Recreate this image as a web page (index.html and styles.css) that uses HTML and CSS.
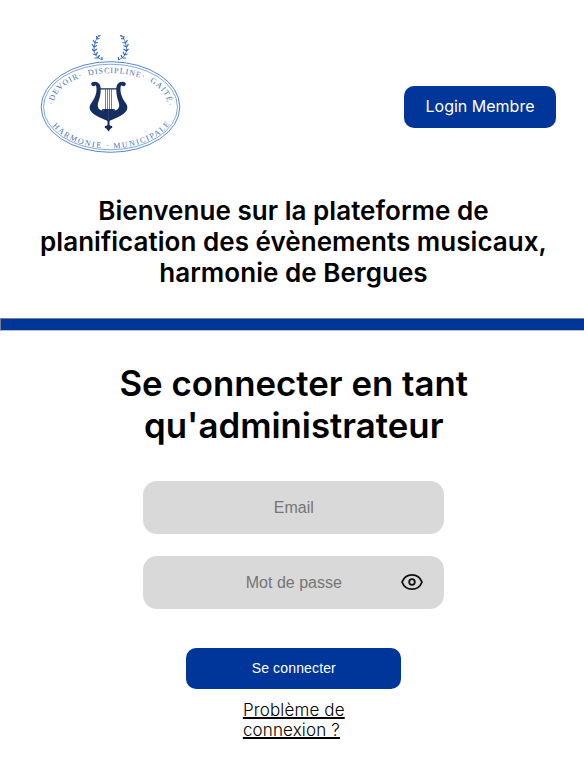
FILE: index.html
```html
<!DOCTYPE html>
<html lang="fr">
<head>
<meta charset="utf-8">
<title>Harmonie de Bergues</title>
<link rel="stylesheet" href="styles.css">
</head>
<body>
<header class="header">
  <svg class="logo" viewBox="30 25 160 135" role="img" aria-label="Harmonie municipale">
    <defs>
      <path id="arc-top" d="M53.500 105A57 32 0 0 1 167.500 105V112"/>
      <path id="arc-bottom" d="M52.500 126A65 41 0 0 0 170.500 123"/>
      <g id="branch">
        <path d="M102 60Q93 56 94 47Q95 40 99 35" fill="none" stroke="#3f74c4" stroke-width=".9"/>
        <path d="M98.500 36.500l2-1M97 39l-.5-3M97 39l2.500-.5M95 43l-2-3M95 43l3-.5M94 47l-2-3M94 47l3-1.500M94 51l-2-2M94 51l3-2M96 55l-3-1M96 55l1.500-3M98 58l-3.500 0M98 58l1.500-3M102 60l0-3" fill="none" stroke="#2f68bd" stroke-width="1.200"/>
      </g>
      <path id="lyre-half" d="M108.700 122C106 119.500 101 118.500 96 115.500C90 112 88 108 91 103.500C94 99.500 97 94 96.500 88C96.300 86.500 96 85.500 95.300 85.300C94.500 87 91 86.400 91.100 83.800C91.400 81.500 95.500 81 97.700 82.500C100.200 83.900 100.800 86.500 100.700 90C100.600 97 98.700 100 97.900 104C97.300 107.500 99 109.500 101.500 110.300C103 110.800 104 110.800 104 110.500H102.300V109H108.700Z"/>
    </defs>
    <use href="#branch"/>
    <use href="#branch" transform="translate(220.500 0) scale(-1 1)"/>
    <g fill="none" stroke="#4b82cd">
      <ellipse cx="110.500" cy="107" rx="69.300" ry="45.300" stroke-width=".95"/>
      <ellipse cx="110.500" cy="107" rx="67" ry="42.800" stroke-width=".7"/>
    </g>
    <g class="motto">
      <text><textPath href="#arc-top" textLength="143">·DEVOIR·&#160; DISCIPLINE·&#160; GAITÉ·</textPath></text>
      <text><textPath href="#arc-bottom" textLength="130">HARMONIE · MUNICIPALE</textPath></text>
    </g>
    <g fill="#152e61">
      <use href="#lyre-half"/>
      <use href="#lyre-half" transform="translate(217 0) scale(-1 1)"/>
      <path d="M99 88.300h19v1.200H99zM107.500 121h2v4h-2zM108.500 123.500l3.200 3.800-3.200 4.200-3.200-4.200z"/>
      <circle cx="105.900" cy="127" r="1.200"/><circle cx="111.100" cy="127" r="1.200"/>
    </g>
    <path d="M105.500 89v20M107.500 89v20M109.500 89v20M111.500 89v20" stroke="#4b5d86" stroke-width=".8"/>
  </svg>
  <a class="login">Login Membre</a>
</header>
<h2 class="welcome">Bienvenue sur la plateforme de<br>planification des évènements musicaux,<br>harmonie de Bergues</h2>
<hr class="divider">
<main class="main">
  <h1 class="title">Se connecter en tant<br>qu'administrateur</h1>
  <form class="form">
    <input class="field" type="email" placeholder="Email">
    <div class="password">
      <input class="field" type="password" placeholder="Mot de passe">
      <svg class="eye" viewBox="0 0 24 24" fill="none" stroke="#111" stroke-width="1.800" stroke-linejoin="round"><path d="M2 12C3.500 8 7 4.800 12 4.800S20.500 8 22 12C20.500 16 17 19.200 12 19.200S3.500 16 2 12Z"/><circle cx="12" cy="12" r="2.800"/></svg>
    </div>
    <button class="submit" type="button">Se connecter</button>
  </form>
  <a class="help">Problème de<br>connexion ?</a>
</main>
</body>
</html>
```
FILE: styles.css
```css
* { box-sizing: border-box; }
body {
  margin: 0;
  background: #fff;
  color: #000;
  font-family: Inter, "Liberation Sans", sans-serif;
  overflow: hidden;
}
.header {
  display: flex;
  justify-content: space-between;
  padding: 25px 28px 0 30px;
  height: 195px;
}
.logo { width: 160px; height: 135px; }
.motto {
  font-family: "Liberation Serif", serif;
  font-size: 8px;
  fill: #3f72b9;
}
.login {
  display: flex;
  align-items: center;
  justify-content: center;
  width: 152px;
  height: 41.500px;
  margin-top: 61.200px;
  padding-bottom: 2px;
  border-radius: 10px;
  background: #003599;
  color: #fff;
  font-size: 16px;
}
.welcome {
  margin: 0;
  padding-left: 3px;
  font-size: 26px;
  font-weight: 640;
  line-height: 31px;
  letter-spacing: .04px;
  text-align: center;
}
.divider {
  width: 588px;
  height: 13px;
  margin: 30.300px 0 0;
  border: 1px solid;
  border-color: #767f96 #b4bfdb #b4bfdb #767f96;
  background: #003599;
}
.main {
  display: flex;
  flex-direction: column;
  align-items: center;
  padding: 30.700px 0 0 3.600px;
}
.title {
  margin: 0;
  font-size: 34.800px;
  font-weight: 630;
  line-height: 42px;
  text-align: center;
}
.form {
  display: flex;
  flex-direction: column;
  align-items: center;
  padding-top: 35.200px;
}
.field {
  display: block;
  width: 301px;
  height: 53px;
  border: 0;
  border-radius: 14px;
  padding: 0;
  background: #d9d9d9;
  font: 16px "Liberation Sans", sans-serif;
  text-align: center;
}
.field::placeholder { color: #757575; }
.password { position: relative; margin: 22px 0 38.800px; }
.eye {
  position: absolute;
  top: 14.200px;
  right: 20px;
  width: 24px;
  height: 24px;
}
.submit {
  width: 215px;
  height: 41px;
  padding: 0 0 1px;
  border: 0;
  border-radius: 10px;
  background: #003599;
  color: #fff;
  font: 14px "Liberation Sans", sans-serif;
  letter-spacing: .15px;
}
.help {
  margin-top: 11px;
  font-size: 17px;
  font-weight: 300;
  line-height: 20px;
  letter-spacing: .15px;
  text-decoration: underline;
  text-decoration-thickness: 1.500px;
}
```
